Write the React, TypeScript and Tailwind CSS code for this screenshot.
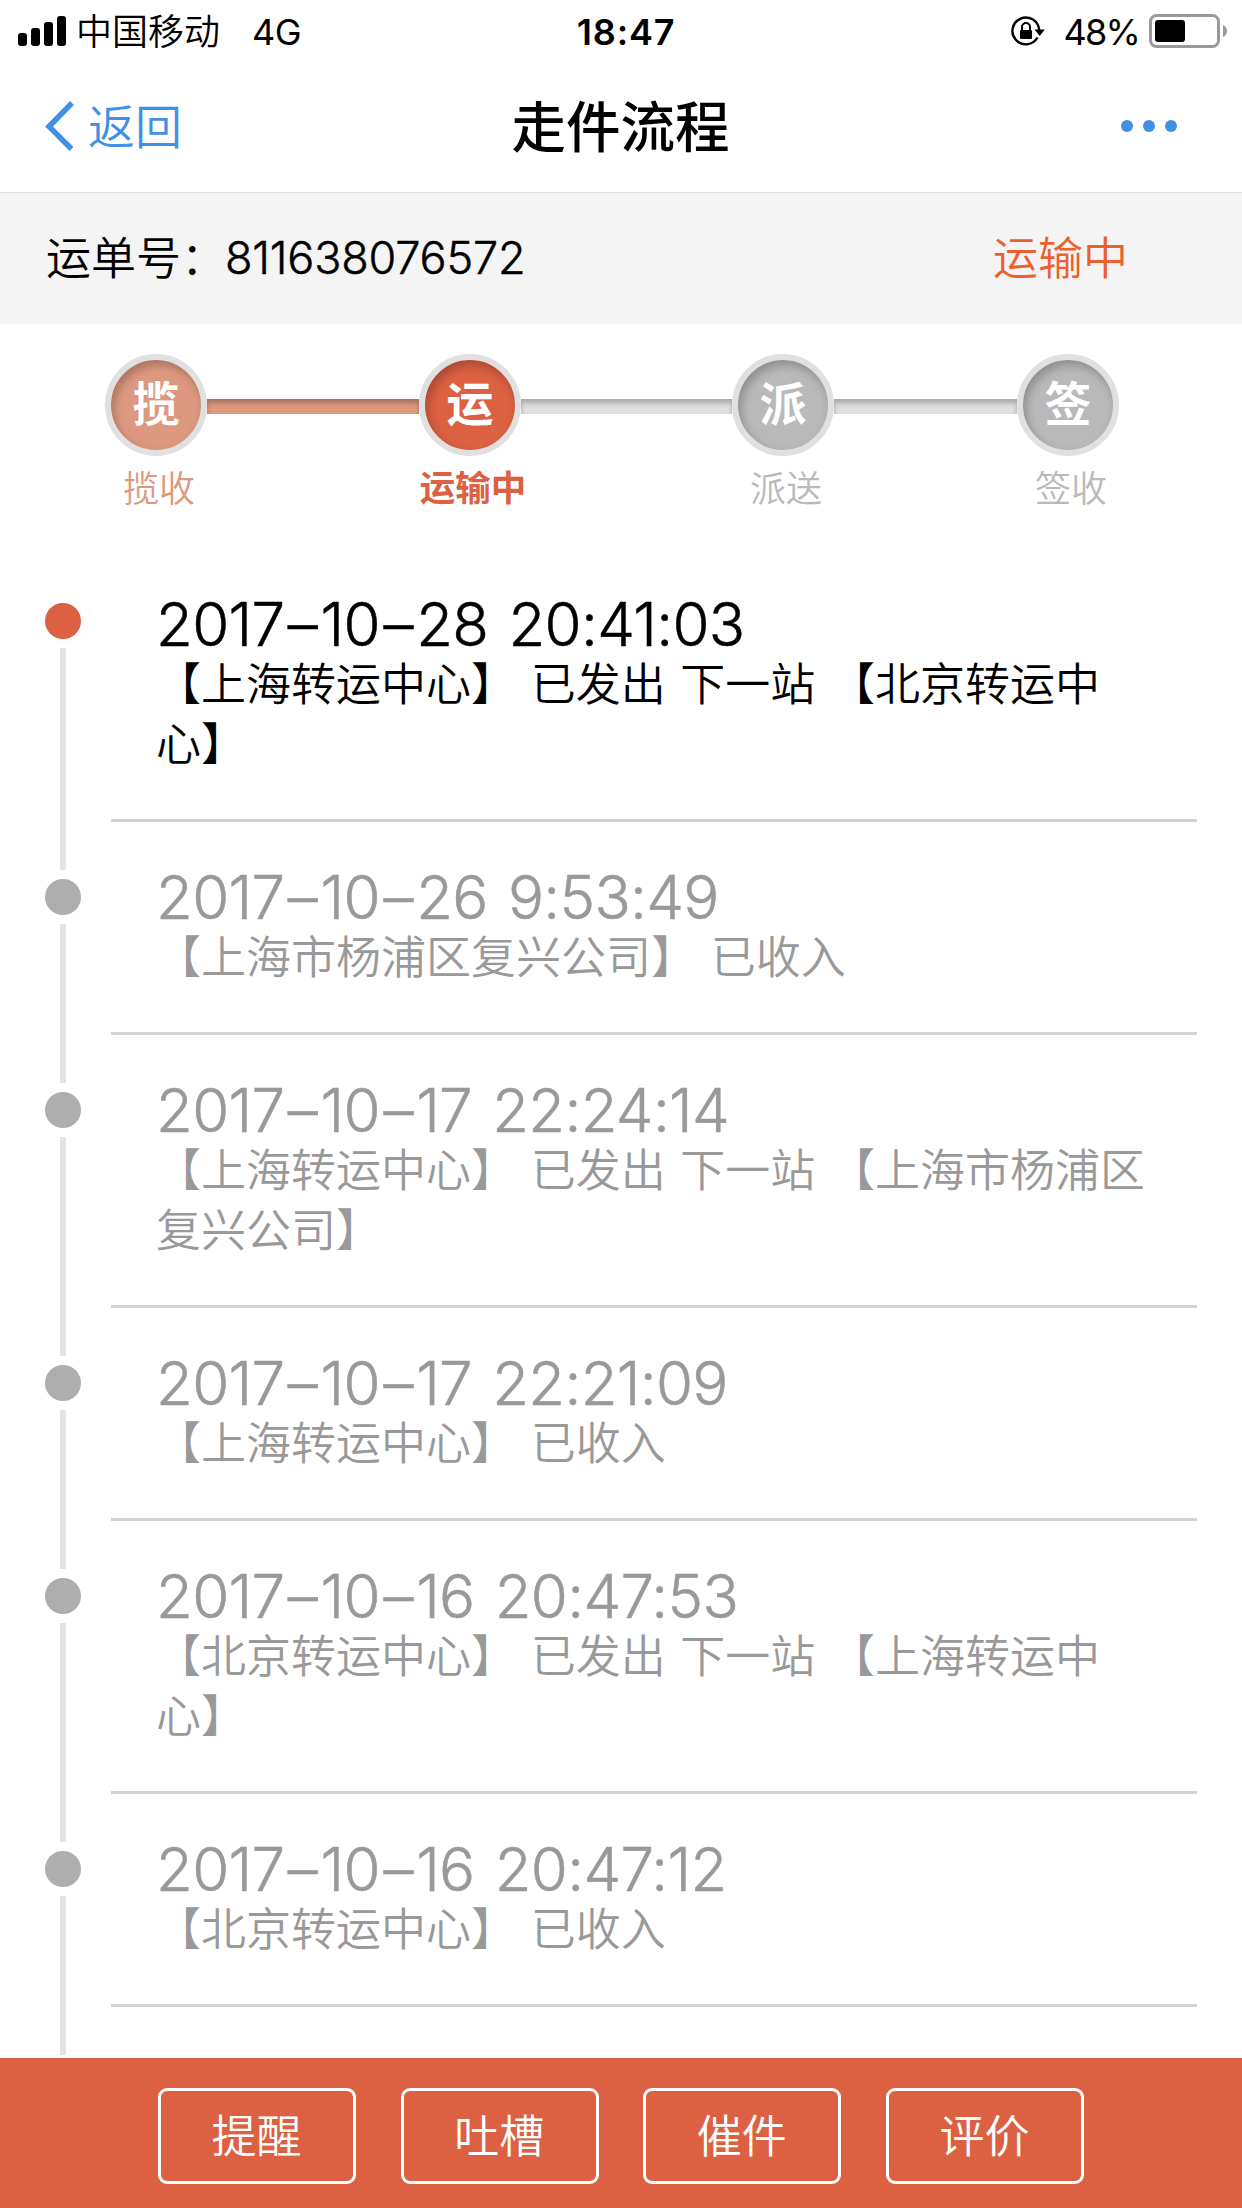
interface Step {
  mark: string
  label: string
  circle: string
  text: string
  line?: string
}

interface TrackItem {
  date: string[]
  clock: string
  lines: string[]
}

const steps: Step[] = [
  {
    mark: '揽',
    label: '揽收',
    circle: 'bg-[#dd997f]',
    text: 'text-[36px] text-[#dd997f]',
    line: 'w-[212px] bg-[#dd997f]',
  },
  {
    mark: '运',
    label: '运输中',
    circle: 'bg-[#dc6142]',
    text: 'text-[35.5px] font-bold text-[#dc6142]',
    line: 'w-[211px] bg-[#e0e0e0]',
  },
  {
    mark: '派',
    label: '派送',
    circle: 'bg-[#b9b9b9]',
    text: 'text-[36px] text-[#b9b9b9]',
    line: 'w-[183px] bg-[#e0e0e0]',
  },
  { mark: '签', label: '签收', circle: 'bg-[#b9b9b9]', text: 'text-[36px] text-[#b9b9b9]' },
]

const items: TrackItem[] = [
  { date: ['2017', '10', '28'], clock: '20:41:03', lines: ['【上海转运中心】 已发出 下一站 【北京转运中', '心】'] },
  { date: ['2017', '10', '26'], clock: '9:53:49', lines: ['【上海市杨浦区复兴公司】 已收入'] },
  { date: ['2017', '10', '17'], clock: '22:24:14', lines: ['【上海转运中心】 已发出 下一站 【上海市杨浦区', '复兴公司】'] },
  { date: ['2017', '10', '17'], clock: '22:21:09', lines: ['【上海转运中心】 已收入'] },
  { date: ['2017', '10', '16'], clock: '20:47:53', lines: ['【北京转运中心】 已发出 下一站 【上海转运中', '心】'] },
  { date: ['2017', '10', '16'], clock: '20:47:12', lines: ['【北京转运中心】 已收入'] },
]

const actions = ['提醒', '吐槽', '催件', '评价']

function StatusBar() {
  return (
    <div className="grid h-[60px] grid-cols-3 items-center pr-[15px] pl-[18px] text-[36px] leading-[60px]">
      <div className="flex items-center whitespace-pre">
        <svg width="48" height="30" viewBox="0 0 48 30">
          <rect x="0" y="17" width="9" height="13" rx="3" />
          <rect x="13" y="12" width="9" height="18" rx="3" />
          <rect x="26" y="6" width="9" height="24" rx="3" />
          <rect x="39" y="0" width="9" height="30" rx="3" />
        </svg>
        <span className="mt-[2px] ml-[10px] font-[350]">中国移动</span>
        <span className="mt-[2px] ml-[32px] tracking-[-0.5px]">4G</span>
      </div>
      <div className="mt-px pl-[7px] text-center font-semibold tracking-[0.8px]">18:47</div>
      <div className="flex items-center justify-end">
        <svg width="34" height="30" viewBox="0 0 34 30" className="mr-[19px]">
          <path
            d="M26.5 21.5A13.4 13.4 0 1 1 28.2 14"
            fill="none"
            stroke="#000"
            strokeWidth="2.4"
          />
          <path d="M23.5 13.5h10.3l-5.1 6.5z" />
          <rect x="9" y="14" width="12" height="9" rx="1" />
          <path d="M11 15v-4a4 4 0 0 1 8 0v4" fill="none" stroke="#000" strokeWidth="2" />
        </svg>
        <span className="mt-px tracking-[-1.8px]">48%</span>
        <svg width="78" height="34" viewBox="0 0 78 34" className="ml-[10px]">
          <rect x="1.5" y="1.5" width="68" height="31" rx="6" fill="none" stroke="#999" strokeWidth="3" />
          <rect x="6" y="6" width="30" height="22" rx="3" />
          <path d="M74 11q4 2 4 6t-4 6z" fill="#999" />
        </svg>
      </div>
    </div>
  )
}

function NavBar() {
  return (
    <div className="grid h-[133px] grid-cols-[1fr_auto_1fr] items-center border-b border-[#dedede] pr-[65px] pl-[45px]">
      <button className="flex items-center text-[47px] leading-[60px] font-[350] text-[#4190e6]">
        <svg width="30" height="50" viewBox="0 0 30 50" fill="none" stroke="currentColor" strokeWidth="5.5">
          <path d="M27 2L4 25.5L26.5 48" />
        </svg>
        <span className="mt-[2px] ml-[13px]">返回</span>
      </button>
      <h1 className="mt-px ml-[19px] text-center text-[54.5px] leading-[60px] font-medium whitespace-nowrap">
        走件流程
      </h1>
      <div className="flex justify-end gap-[10px]">
        <i className="size-3 rounded-full bg-[#4190e6]" />
        <i className="size-3 rounded-full bg-[#4190e6]" />
        <i className="size-3 rounded-full bg-[#4190e6]" />
      </div>
    </div>
  )
}

function Steps() {
  return (
    <div className="flex h-[225px] pt-[30px] pl-[105px] font-[350]">
      {steps.map((step) => (
        <div key={step.mark} className="flex">
          <div className="flex w-[102px] flex-col items-center">
            <div
              className={`flex size-[102px] shrink-0 items-center justify-center rounded-full border-[6px] border-[#e0e0e0] pb-[3px] text-[47px] leading-none font-bold text-white shadow-[inset_3px_5px_10px_rgba(0,0,0,0.24)] ${step.circle}`}
            >
              {step.mark}
            </div>
            <div className={`mt-[9px] pl-[6px] leading-[48px] whitespace-nowrap ${step.text}`}>{step.label}</div>
          </div>
          {step.line && (
            <div className={`mt-[45px] h-[15px] shadow-[inset_0_4px_5px_rgba(0,0,0,0.25)] ${step.line}`} />
          )}
        </div>
      ))}
    </div>
  )
}

function Dash() {
  return <span className="mx-[3.5px]">–</span>
}

function Row({ item, first }: { item: TrackItem; first: boolean }) {
  const [year, month, day] = item.date

  return (
    <div className="flex">
      <div className="flex w-[50px] shrink-0 flex-col items-center">
        <div className={`w-[6px] shrink-0 ${first ? 'h-[45px]' : 'h-[48px] bg-[#e3e3e3]'}`} />
        <div className={`my-[9px] size-[36px] shrink-0 rounded-full ${first ? 'bg-[#dc6142]' : 'bg-[#aeaeae]'}`} />
        <div className="w-[6px] grow bg-[#e3e3e3]" />
      </div>
      <div
        className={`ml-[23px] w-[1086px] border-b-[3px] border-[#d3d3d3] pt-[45px] pb-[44px] pl-[45px] ${first ? 'text-black' : 'text-[#999]'}`}
      >
        <div className="mb-px text-[60px] leading-[60px] font-light tracking-[-0.7px] whitespace-nowrap [word-spacing:4px] [-webkit-text-stroke:0.5px]">
          {year}
          <Dash />
          {month}
          <Dash />
          {day} {item.clock}
        </div>
        {item.lines.map((line) => (
          <div
            key={line}
            className="text-[45px] leading-[60px] font-[350] whitespace-pre [word-spacing:2px]"
          >
            {line}
          </div>
        ))}
      </div>
    </div>
  )
}

export default function App() {
  return (
    <div className="flex h-[2208px] w-[1242px] flex-col overflow-hidden bg-white font-['Inter','Noto_Sans_CJK_SC',sans-serif] text-black">
      <StatusBar />
      <NavBar />
      <div className="flex h-[131px] items-center justify-between bg-[#f4f4f4] pr-[114px] pl-[46px] text-[45px] leading-[60px] font-[350]">
        <div className="flex">
          <span>运单号：</span>
          <span className="-mt-px -ml-px tracking-[-0.2px] [-webkit-text-stroke:0.5px]">811638076572</span>
        </div>
        <span className="text-[#ec602d]">运输中</span>
      </div>
      <Steps />
      <div className="flex min-h-0 grow flex-col overflow-hidden pl-[38px]">
        {items.map((item, i) => (
          <Row key={item.clock} item={item} first={i === 0} />
        ))}
        <div className="ml-[22px] h-[48px] w-[6px] shrink-0 bg-[#e3e3e3]" />
      </div>
      <div className="flex h-[150px] shrink-0 gap-[44.7px] bg-[#dc6142] pt-[30px] pl-[158px]">
        {actions.map((name) => (
          <button
            key={name}
            className="flex h-24 w-[198px] items-center justify-center rounded-[9px] border-[3px] border-white pt-px pr-px text-[45px] leading-[60px] font-[350] text-white"
          >
            {name}
          </button>
        ))}
      </div>
    </div>
  )
}
